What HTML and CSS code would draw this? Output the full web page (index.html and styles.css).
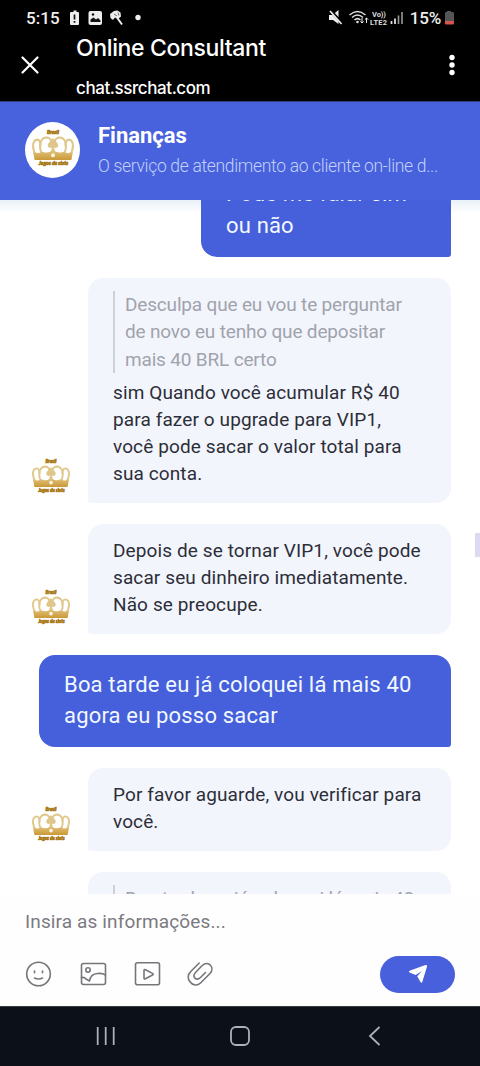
FILE: index.html
```html
<!DOCTYPE html>
<html lang="pt-BR">
<head>
<meta charset="utf-8">
<meta name="viewport" content="width=device-width, initial-scale=1">
<title>Online Consultant</title>
<link rel="stylesheet" href="styles.css">
</head>
<body>
<svg width="0" height="0" class="defs" aria-hidden="true">
  <defs>
    <linearGradient id="gold" x1="0" y1="0" x2="0" y2="1">
      <stop offset="0" stop-color="#e2c684"/><stop offset="1" stop-color="#cb9936"/>
    </linearGradient>
    <symbol id="crown" viewBox="0 0 40 36">
      <g fill="none" stroke="#e0c88c" stroke-width="2">
        <path d="M4.500 25C-.5 19 0 10.500 5 10C8 10 8 14 8 16"/>
        <path d="M10 25C5.500 16 8 8.500 13.500 8C16.500 8 18 10 18.500 12"/>
        <path d="M35.500 25C40.500 19 40 10.500 35 10C32 10 32 14 32 16"/>
        <path d="M30 25C34.500 16 32 8.500 26.500 8C23.500 8 22 10 21.500 12"/>
      </g>
      <path d="M20 8.500C22 11.500 25 13 25 15.700C25 18 22 18.500 20.800 17.300L22 20.500H18L19.200 17.300C18 18.500 15 18 15 15.700C15 13 18 11.500 20 8.500Z" fill="#dfc68a"/>
      <path d="M1 21.500Q5 24 10 21.500Q16 24 20 19.500Q24 24 30 21.500Q35 24 39 21.500L37.500 29.500H2.500Z" fill="url(#gold)"/>
      <circle cx="20" cy="25" r="1.900" fill="#fff8e4"/>
      <text x="20" y="4.800" text-anchor="middle" class="crown-text">Brasil</text>
      <text x="20.500" y="34.500" text-anchor="middle" class="crown-text">Jogos de slots</text>
    </symbol>
  </defs>
</svg>
<div class="screen">
  <div class="status">
    <span class="clock">5:15</span>
    <svg class="notif" width="74" height="18" viewBox="0 0 74 18">
      <path d="M3 3h1.500V1.500h3V3H9q1 0 1 1v11q0 1-1 1H2q-1 0-1-1V4q0-1 1-1z" fill="#eee"/>
      <path d="M5.500 5.500v5M5.500 12v1.800" stroke="#111" stroke-width="1.700"/>
      <rect x="19.500" y="2" width="13.500" height="14" rx="2" fill="#eee"/>
      <path d="M21.500 13v-2.500l3-2 2.500 2 2-1.500 2.500 2.500V13z" fill="#111"/><circle cx="24" cy="5.500" r="1.200" fill="#111"/>
      <path d="M41 5l4-3 3.500-.5 3 2 .5 4-3 2.500-3-1.500-2 2.500-2.500-2z" fill="#eee"/>
      <path d="M48 8.500l5 7" stroke="#eee" stroke-width="2"/><path d="M45 5l3 2M49 3.500l1 3" stroke="#333" stroke-width=".7"/>
      <circle cx="69" cy="8.500" r="2.700" fill="#eee"/>
    </svg>
    <span class="grow"></span>
    <svg width="76" height="18" viewBox="0 0 76 18">
      <path d="M0 6h3.500L9.500 1v14L4 11H0z" fill="#eee"/><path d="M1 1l12 13" stroke="#000" stroke-width="3"/><path d="M1 2l11.500 13" stroke="#eee" stroke-width="1.700"/>
      <g fill="none" stroke="#ddd" stroke-width="1.500"><path d="M20.500 6q8-7 16 0M23 8.500q5.500-5 11 0M25.500 11q3-2.700 6 0"/></g>
      <circle cx="28.500" cy="13" r="1.300" fill="#ddd"/>
      <path d="M33 9v5m-1.600-1.600L33 14l1.600-1.600M37.500 14V9m-1.600 1.600L37.500 9l1.600 1.600" fill="none" stroke="#eee"/>
      <text x="43" y="8" class="lte" textLength="14">Vo))</text><text x="41" y="15.500" class="lte" textLength="17">LTE2</text>
      <path d="M62.500 12v3M66 9.500V15" stroke="#ddd" stroke-width="1.800"/><path d="M69.500 6.500V15M73 3v12" stroke="#999" stroke-width="1.600"/>
    </svg>
    <span class="percent">15%</span>
    <svg width="11" height="16" viewBox="0 0 11 16"><path d="M1 3q0-1 1-1h1V1h4v1h1q2 0 2 1v10H1z" fill="#555"/><path d="M1 11h9v2.500q0 1-1 1H2q-1 0-1-1z" fill="#d9534f"/></svg>
  </div>
  <div class="browser">
    <svg class="close" width="20" height="20" viewBox="0 0 20 20"><path d="M2.500 2.500l15 15M17.500 2.500l-15 15" stroke="#fff" stroke-width="2.200" stroke-linecap="round"/></svg>
    <div class="page-info"><div class="page-title">Online Consultant</div><div class="page-url">chat.ssrchat.com</div></div>
    <svg class="more" width="8" height="24" viewBox="0 0 8 24" fill="#fff"><circle cx="4" cy="4.500" r="2.700"/><circle cx="4" cy="12" r="2.700"/><circle cx="4" cy="19.500" r="2.700"/></svg>
  </div>
  <header class="agent">
    <div class="agent-photo"><svg width="42" height="38"><use href="#crown"/></svg></div>
    <div class="agent-info"><div class="agent-name">Finanças</div><div class="agent-note">O serviço de atendimento ao cliente on-line d...</div></div>
  </header>
  <main class="chat">
    <div class="messages">
      <div class="bubble mine first">Pode me falar sim<br>ou não</div>
      <div class="row"><svg class="avatar" width="38" height="36"><use href="#crown"/></svg>
        <div class="bubble theirs"><div class="quote">Desculpa que eu vou te perguntar<br>de novo eu tenho que depositar<br>mais 40 BRL certo</div>sim Quando você acumular R$ 40<br>para fazer o upgrade para VIP1,<br>você pode sacar o valor total para<br>sua conta.</div></div>
      <div class="row"><svg class="avatar" width="38" height="36"><use href="#crown"/></svg>
        <div class="bubble theirs">Depois de se tornar VIP1, você pode<br>sacar seu dinheiro imediatamente.<br>Não se preocupe.</div></div>
      <div class="bubble mine second">Boa tarde eu já coloquei lá mais 40<br>agora eu posso sacar</div>
      <div class="row"><svg class="avatar" width="38" height="36"><use href="#crown"/></svg>
        <div class="bubble theirs">Por favor aguarde, vou verificar para<br>você.</div></div>
      <div class="row"><div class="bubble theirs"><div class="quote">Boa tarde eu já coloquei lá mais 40</div></div></div>
    </div>
    <span class="side-tab"></span>
  </main>
  <footer class="composer">
    <div class="placeholder">Insira as informações...</div>
    <div class="tools">
      <svg width="26" height="26" viewBox="0 0 26 26"><circle cx="13.500" cy="13" r="11.800"/><path d="M9.500 10v1.700M17.500 10v1.700M9.500 17q4 2 8 0"/></svg>
      <svg width="26" height="26" viewBox="0 0 26 26"><rect x="2.500" y="2.500" width="24" height="21" rx="2"/><circle cx="9" cy="9" r="2.200"/><path d="M2.500 16.500q3-.5 4.500 1.500l3.500 2q1-7 8-7.500 5-.5 8 1.500"/></svg>
      <svg width="26" height="26" viewBox="0 0 26 26"><rect x="2.500" y="1.800" width="24" height="22" rx="2"/><path d="M11 9.500q0-1.500 1.500-.8l7 3.700q1.500.8 0 1.600l-7 3.800q-1.500.8-1.500-.8z"/></svg>
      <svg width="26" height="26" viewBox="0 0 26 26"><path d="M12.200 2L3.500 10.800A7.200 7.200 0 0 0 3 20.800C5.700 24.800 10.500 25 13.500 22L23 12.500C28.300 6.500 21.500-.8 15.200 4.500L8.500 11.500C4.500 16 9.500 20.500 13.500 16.500L18.500 11.500"/></svg>
      <span class="grow"></span>
      <button class="send" aria-label="Enviar"><svg width="20" height="20" viewBox="0 0 20 20"><path d="M1.500 6.700L17.500 1Q19.500.6 19 2.500L14.300 18Q13.500 19.500 12.500 18L9.200 12.300L14 7L7.700 11L1.500 8.500Q.5 7.500 1.500 6.700Z" fill="#fff"/></svg></button>
    </div>
  </footer>
  <nav class="system">
    <svg width="20" height="20" viewBox="0 0 20 20"><path d="M2.700 1v18M10.700 1v18M18.700 1v18"/></svg>
    <svg width="20" height="20" viewBox="0 0 20 20"><rect x="1" y="1" width="18" height="18" rx="5"/></svg>
    <svg width="20" height="20" viewBox="0 0 20 20"><path d="M14.500 1L5 10l9.500 9"/></svg>
  </nav>
</div>
</body>
</html>
```
FILE: styles.css
```css
* { box-sizing: border-box; }
body { margin: 0; font-family: Roboto, "Liberation Sans", sans-serif; }
svg { display: block; flex: none; overflow: visible; }
.defs { position: absolute; }
.crown-text { font: italic 700 4.900px Lato, sans-serif; fill: #8f6510; stroke: #a97a18; stroke-width: .6px; }
.screen { width: 480px; height: 1066px; display: flex; flex-direction: column; overflow: hidden; background: #fff; }
.grow { flex: 1; }

.status { height: 34px; flex: none; display: flex; align-items: center; padding: 1px 25px 0 26px; background: #000; color: #eee; font-size: 17px; font-weight: 500; }
.clock { width: 43px; letter-spacing: .1px; }
.percent { margin: 1px 3px 0 5px; letter-spacing: -.2px; }
.lte { font: 700 7.500px Roboto, sans-serif; fill: #ddd; }

.browser { height: 67px; flex: none; display: flex; background: #000; color: #fff; padding: 0 24px 0 20px; font-family: Inter, Roboto, sans-serif; }
.close { margin-top: 21px; }
.page-info { flex: 1; padding-left: 36px; }
.page-title { font-size: 23px; line-height: 28px; font-weight: 500; letter-spacing: -.370px; white-space: nowrap; }
.page-url { margin-top: 15px; font-size: 17px; line-height: 22px; font-weight: 500; letter-spacing: -.420px; }
.more { margin-top: 19px; }

.agent { height: 99px; flex: none; display: flex; padding: 20px 25px 0; background: #4861dc; color: #fff; position: relative; z-index: 1; border-top: 1px solid #35406f; }
.agent-photo { width: 55px; height: 56px; border-radius: 50%; background: #fff; display: flex; justify-content: center; align-items: center; padding-bottom: 4px; }
.agent-info { padding-left: 18px; white-space: nowrap; }
.agent-name { font-size: 22px; line-height: 28px; font-weight: 700; }
.agent-note { margin-top: 4px; font-size: 17.500px; line-height: 24px; font-weight: 300; letter-spacing: -.320px; color: #c2d2fb; }

.chat { flex: 1; min-height: 0; overflow: hidden; position: relative; background: linear-gradient(#e8f1f7, #fff 13px); }
.messages { display: flex; flex-direction: column; gap: 21px; padding: 0 29px 0 32px; margin-top: -36px; }
.row { display: flex; align-items: flex-end; justify-content: flex-end; }
.avatar { margin: 0 auto 9px 0; }
.bubble { white-space: nowrap; padding: 14px 25px 15px; }
.theirs { width: 363px; padding: 13.400px 25px 15.300px; border-radius: 15px 15px 15px 3px; background: #f3f5fd; color: #2c2e38; font-size: 19px; line-height: 27.100px; letter-spacing: .110px; }
.mine { align-self: flex-end; border-radius: 16px 16px 3px 16px; background: #4560da; color: #f2f8ff; font-size: 22px; line-height: 31.500px; letter-spacing: .170px; }
.first { width: 250px; padding-bottom: 16px; }
.second { width: 412px; }
.quote { border-left: 2px solid #cfd1d9; padding-left: 10px; margin-bottom: 6.500px; color: #a0a3ac; letter-spacing: -.170px; }
.side-tab { position: absolute; right: 0; top: 333px; width: 5px; height: 24px; background: #ddd9f3; }

.composer { height: 112px; flex: none; padding: 14px 25px 0; background: #fefefe; }
.placeholder { font-size: 19px; line-height: 28px; letter-spacing: .130px; color: #7c7a80; }
.tools { display: flex; align-items: center; height: 38px; margin-top: 19px; gap: 28px; }
.tools > svg { fill: none; stroke: #77757a; stroke-width: 1.600px; stroke-linecap: round; stroke-linejoin: round; }
.send { width: 75px; height: 37px; border: 0; padding: 0; border-radius: 19px; background: #4860dc; display: flex; align-items: center; justify-content: center; }

.system { height: 60px; flex: none; display: flex; align-items: center; justify-content: space-between; padding: 0 95px 2px; background: #0c1018; border-top: 1px solid #393c42; }
.system svg { fill: none; stroke: #aeb0b6; stroke-width: 1.800px; }
```
